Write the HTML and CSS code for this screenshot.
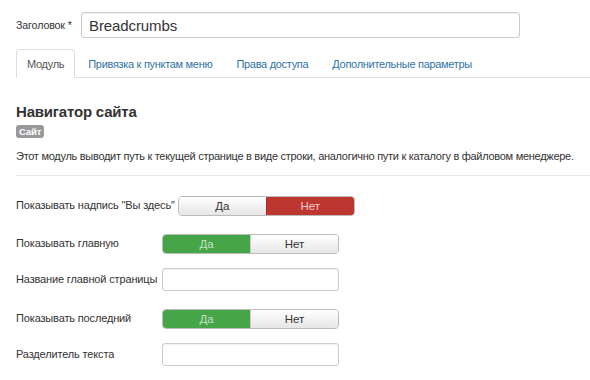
FILE: index.html
```html
<!DOCTYPE html>
<html>
<head>
  <meta charset="UTF-8">
  <title>Навигатор сайта</title>
  <link rel="stylesheet" href="styles.css">
</head>
<body>
  <div class="page">
    <div class="title-row">
      <label for="title" class="title-label">Заголовок *</label>
      <input type="text" id="title" class="title-input" value="Breadcrumbs">
    </div>

    <ul class="tabs">
      <li class="active"><a href="#">Модуль</a></li>
      <li><a href="#">Привязка к пунктам меню</a></li>
      <li><a href="#">Права доступа</a></li>
      <li><a href="#">Дополнительные параметры</a></li>
    </ul>

    <h2 class="module-title">Навигатор сайта</h2>
    <span class="badge">Сайт</span>
    <p class="description">Этот модуль выводит путь к текущей странице в виде строки, аналогично пути к каталогу в файловом менеджере.</p>
    <hr>

    <!-- module options -->
    <div class="control-group">
      <label class="control-label">Показывать надпись "Вы здесь"</label>
      <div class="toggle">
        <button>Да</button>
        <button class="on-no">Нет</button>
      </div>
    </div>

    <div class="control-group">
      <label class="control-label">Показывать главную</label>
      <div class="toggle">
        <button class="on-yes">Да</button>
        <button>Нет</button>
      </div>
    </div>

    <div class="control-group field">
      <label class="control-label">Название главной страницы</label>
      <input type="text" class="text-input">
    </div>

    <div class="control-group">
      <label class="control-label">Показывать последний</label>
      <div class="toggle">
        <button class="on-yes">Да</button>
        <button>Нет</button>
      </div>
    </div>

    <div class="control-group field">
      <label class="control-label">Разделитель текста</label>
      <input type="text" class="text-input">
    </div>
  </div>
</body>
</html>
```

FILE: styles.css
```css
body {
  margin: 0;
  background: #fff;
  font-family: "Liberation Sans", Arial, sans-serif;
  font-size: 11px;
  letter-spacing: -0.15px;
  color: #333;
}
.page {
  padding: 12px 0 0 16px;
}
.title-row {
  display: flex;
  align-items: center;
}
.title-label {
  width: 65px;
  font-size: 10.7px;
  color: #333;
}
.title-input {
  width: 439px;
  height: 26px;
  box-sizing: border-box;
  border: 1px solid #ccc;
  border-radius: 3px;
  padding: 0 7px;
  font-family: "Liberation Sans", Arial, sans-serif;
  font-size: 15px;
  letter-spacing: -0.1px;
  color: #333;
  box-shadow: inset 0 1px 1px rgba(0,0,0,0.06);
}
.tabs {
  display: flex;
  list-style: none;
  margin: 11px 0 0;
  padding: 0;
  border-bottom: 1px solid #ddd;
}
.tabs li {
  margin-bottom: -1px;
  margin-right: 2px;
}
.tabs a {
  display: block;
  height: 27px;
  line-height: 28px;
  padding: 0 10px;
  border: 1px solid transparent;
  border-radius: 4px 4px 0 0;
  color: #2f73a8;
  letter-spacing: -0.3px;
  text-decoration: none;
}
.tabs .active a {
  color: #555;
  background: #fff;
  border-color: #ddd #ddd transparent;
}
.module-title {
  margin: 24px 0 3px;
  font-size: 15px;
  line-height: 20px;
  letter-spacing: -0.2px;
  font-weight: bold;
  color: #333;
}
.badge {
  display: inline-block;
  background: #999;
  color: #fff;
  font-size: 9.5px;
  font-weight: bold;
  line-height: 13px;
  padding: 0 3px;
  border-radius: 3px;
}
.description {
  margin: 9px 0 0;
  line-height: 18px;
  letter-spacing: -0.28px;
}
hr {
  margin: 10px 0 20px;
  border: 0;
  border-top: 1px solid #e8e8e8;
}
.control-group {
  display: flex;
  align-items: flex-start;
  margin-bottom: 18px;
}
.control-group.field {
  margin-top: -4px;
}
.control-label {
  min-width: 143px;
  margin-right: 3px;
  line-height: 18px;
}
.field .control-label {
  padding-top: 2px;
}
.toggle {
  display: flex;
  width: 177px;
  height: 20px;
  box-sizing: border-box;
  border: 1px solid #bbb;
  border-radius: 4px;
  overflow: hidden;
}
.toggle button {
  flex: 1;
  margin: 0;
  padding: 0;
  border: 0;
  font-family: "Liberation Sans", Arial, sans-serif;
  font-size: 11.5px;
  color: #333;
  background: linear-gradient(#fff, #e6e6e6);
}
.toggle button + button {
  border-left: 1px solid #ccc;
}
.toggle .on-yes {
  background: #46a546;
  color: rgba(255,255,255,0.7);
}
.toggle .on-no {
  background: #bd362f;
  color: rgba(255,255,255,0.75);
  border-left-color: #a52f29;
}
.text-input {
  width: 177px;
  height: 23px;
  box-sizing: border-box;
  border: 1px solid #ccc;
  border-radius: 3px;
  box-shadow: inset 0 1px 1px rgba(0,0,0,0.06);
}
```
